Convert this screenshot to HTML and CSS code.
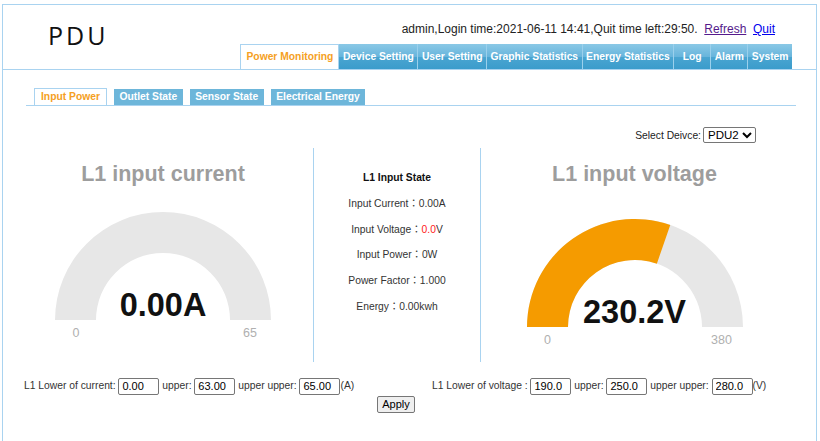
FILE: index.html
```html
<!DOCTYPE html>
<html lang="en">
<head>
  <meta charset="UTF-8">
  <title>PDU - Power Monitoring</title>
  <link rel="stylesheet" href="styles.css">
</head>
<body>
  <div class="frame">
    <div class="header">
      <div class="logo">PDU</div>
      <div class="header-right">
        <div class="user-info">admin,Login time:2021-06-11 14:41,Quit time left:29:50.&nbsp; <a class="visited" href="#">Refresh</a>&nbsp; <a href="#">Quit</a></div>
        <ul class="nav">
          <li class="active">Power Monitoring</li>
          <li>Device Setting</li>
          <li>User Setting</li>
          <li>Graphic Statistics</li>
          <li>Energy Statistics</li>
          <li>Log</li>
          <li>Alarm</li>
          <li>System</li>
        </ul>
      </div>
    </div>

    <div class="content">
      <ul class="subtabs">
        <li class="active">Input Power</li>
        <li>Outlet State</li>
        <li>Sensor State</li>
        <li>Electrical Energy</li>
      </ul>

      <div class="device-row">
        Select Deivce:<select class="device-select"><option>PDU2</option><option>PDU1</option></select>
      </div>

      <div class="panels">
        <!-- current gauge -->
        <div class="panel gauge-panel current">
          <h2 class="gauge-title">L1 input current</h2>
          <div class="gauge">
            <svg width="230" height="110" viewBox="0 0 230 110">
              <path d="M7 110 A108 108 0 0 1 223 110 L182 110 A67 67 0 0 0 48 110 Z" fill="#e7e7e7"/>
            </svg>
            <div class="gauge-value">0.00A</div>
            <div class="gauge-scale"><span>0</span><span>65</span></div>
          </div>
        </div>

        <!-- state list -->
        <div class="panel state-panel">
          <div class="state-title">L1 Input State</div>
          <div>Input Current：0.00A</div>
          <div>Input Voltage：<span class="alert">0.0</span>V</div>
          <div>Input Power：0W</div>
          <div>Power Factor：1.000</div>
          <div>Energy：0.00kwh</div>
        </div>

        <!-- voltage gauge -->
        <div class="panel gauge-panel voltage">
          <h2 class="gauge-title">L1 input voltage</h2>
          <div class="gauge">
            <svg width="230" height="110" viewBox="0 0 230 110">
              <path d="M7 110 A108 108 0 0 1 223 110 L182 110 A67 67 0 0 0 48 110 Z" fill="#e7e7e7"/>
              <path d="M7 110 A108 108 0 0 1 150.25 7.92 L136.87 46.67 A67 67 0 0 0 48 110 Z" fill="#f59b00"/>
            </svg>
            <div class="gauge-value">230.2V</div>
            <div class="gauge-scale"><span>0</span><span>380</span></div>
          </div>
        </div>
      </div>
    </div>

    <div class="limits">
      <div class="limit-group current-limits">L1 Lower of current: <input class="num" type="text" value="0.00"> upper: <input class="num" type="text" value="63.00"> upper upper: <input class="num" type="text" value="65.00">(A)</div>
      <div class="limit-group">L1 Lower of voltage : <input class="num" type="text" value="190.0"> upper: <input class="num" type="text" value="250.0"> upper upper: <input class="num" type="text" value="280.0">(V)</div>
    </div>
    <div class="apply-row">
      <button class="apply" type="button">Apply</button>
    </div>
  </div>
</body>
</html>
```

FILE: styles.css
```css
html, body {
  margin: 0;
  padding: 0;
  background: #fff;
}

body {
  font-family: "Liberation Sans", Arial, "Noto Sans CJK TC", sans-serif;
  font-size: 10.3px;
  color: #333;
}

.frame {
  margin: 4px 0 0 2px;
  width: 813px;
  min-height: 436px;
  border: 1px solid #a9d3f0;
  border-bottom: none;
}

/* Header */
.header {
  display: flex;
  justify-content: space-between;
  height: 64px;
  border-bottom: 1px solid #a9d3f0;
}

.logo {
  font-family: "Open Sans", sans-serif;
  font-size: 25px;
  letter-spacing: 3px;
  line-height: 34px;
  padding: 13px 0 0 45px;
  color: #111;
}

.header-right {
  display: flex;
  flex-direction: column;
  align-items: flex-end;
  padding-right: 24px;
}

.user-info {
  font-size: 12px;
  line-height: 14px;
  margin: 17px 17px 0 0;
  color: #222;
}

.user-info a {
  color: #0000ee;
}

.user-info a.visited {
  color: #551a8b;
}

.nav {
  list-style: none;
  margin: 8px 0 0;
  padding: 0;
  display: flex;
  height: 25px;
}

.nav li {
  min-width: 29px;
  padding: 0 3.5px;
  line-height: 25px;
  text-align: center;
  font-weight: bold;
  color: #fff;
  background: linear-gradient(#8ac8e6, #68b5dc 50%, #4aa5d1 52%, #3b9ccb);
  border-left: 1px solid #9bd0ec;
}

.nav li.active {
  background: #fff;
  color: #f5a023;
  border: 1px solid #a9d3f0;
  border-bottom: none;
  line-height: 24px;
  padding: 0 5px;
}

.nav li.active + li {
  border-left: none;
}

/* Sub tabs */
.content {
  padding: 19px 20px 0 23px;
}

.subtabs {
  list-style: none;
  margin: 0;
  padding: 0 0 0 8px;
  display: flex;
  gap: 7px;
  height: 16px;
  border-bottom: 1px solid #a9d3f0;
}

.subtabs li {
  padding: 0 5.5px;
  line-height: 16px;
  font-weight: bold;
  color: #fff;
  background: #6db6da;
}

.subtabs li.active {
  background: #fff;
  color: #f5a023;
  border: 1px solid #a9d3f0;
  border-bottom: none;
  padding: 0 6px;
  height: 16px;
  margin-top: -1px;
}

.device-row {
  display: flex;
  justify-content: flex-end;
  align-items: center;
  height: 16px;
  margin: 21px 39px 0 0;
  color: #222;
}

.device-select {
  font-family: "Liberation Sans", Arial, sans-serif;
  font-size: 11.5px;
  height: 16px;
  padding: 0;
  margin: 0 1px 0 2px;
  border: 1px solid #767676;
  border-radius: 2px;
  background: #fff;
  color: #000;
}

/* Panels */
.panels {
  display: grid;
  grid-template-columns: 288px 167px 1fr;
  height: 214px;
  margin-top: 5px;
}

.panel {
  border-right: 1px solid #a9d3f0;
}

.panel.voltage {
  border-right: none;
  padding-right: 8px;
}

.panel.current {
  padding-right: 13px;
}

.gauge-title {
  margin: 0;
  padding-top: 14px;
  font-size: 21.5px;
  line-height: 25px;
  font-weight: bold;
  text-align: center;
  color: #9d9d9d;
}

.gauge {
  position: relative;
  width: 230px;
  margin: 23px auto 0;
}

.voltage .gauge {
  margin-top: 30px;
}

.gauge svg {
  display: block;
}

.gauge-value {
  position: absolute;
  top: 79px;
  left: 0;
  right: 0;
  text-align: center;
  font-size: 32.5px;
  line-height: 33px;
  font-weight: bold;
  color: #111;
}

.gauge-scale {
  display: flex;
  justify-content: space-between;
  width: 204px;
  margin: 5px auto 0;
  font-size: 12.5px;
  line-height: 16px;
  color: #b0b0b0;
}

.gauge-scale span {
  width: 30px;
  text-align: center;
}

.state-panel {
  padding-top: 17px;
  text-align: center;
  line-height: 25.8px;
  color: #333;
}

.state-title {
  font-weight: bold;
  color: #111;
}

.alert {
  color: #ff2020;
}

/* Limits form */
.limits {
  display: flex;
  margin-top: 15px;
  padding-left: 21px;
  line-height: 17px;
  color: #333;
}

.limit-group {
  white-space: nowrap;
}

.current-limits {
  flex: 0 0 408px;
}

.num {
  box-sizing: border-box;
  width: 41px;
  height: 17px;
  margin: 0;
  padding: 0 3px;
  border: 1px solid #767676;
  border-radius: 2px;
  font-family: "Liberation Sans", Arial, sans-serif;
  font-size: 11px;
  color: #000;
  vertical-align: middle;
}

.apply-row {
  padding-left: 374px;
  margin-top: 1px;
}

.apply {
  box-sizing: border-box;
  width: 38px;
  height: 17px;
  padding: 0;
  border: 1px solid #767676;
  border-radius: 2px;
  background: #efefef;
  font-family: "Liberation Sans", Arial, sans-serif;
  font-size: 11px;
  color: #000;
}
```
